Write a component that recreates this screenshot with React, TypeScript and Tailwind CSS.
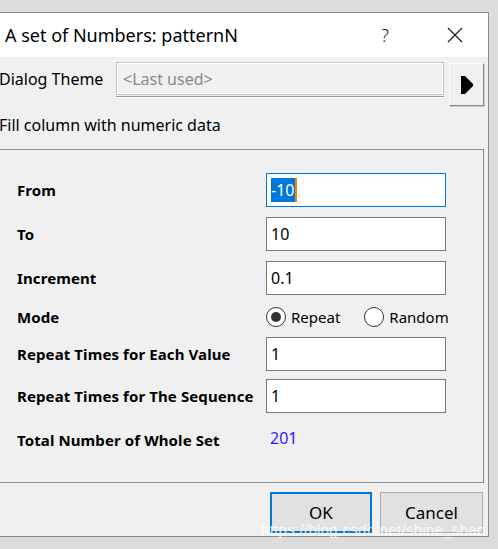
import React from 'react';

const font = "font-['Noto_Sans','DejaVu_Sans',sans-serif]";

const rows = [
  { label: 'From', value: '-10', h: 'h-[44px]', focus: true },
  { label: 'To', value: '10', h: 'h-[44px]' },
  { label: 'Increment', value: '0.1', h: 'h-[44px]' },
];

const TextBox: React.FC<{ value: string; focus?: boolean }> = ({ value, focus }) => (
  <div
    className={`w-[180px] h-[34px] bg-white border flex items-center pl-[4px] text-[16px] text-black ${
      focus ? 'border-[#0078d7]' : 'border-[#7a7a7a]'
    }`}
  >
    {focus ? (
      <span className="flex items-center h-[24px]">
        <span className="bg-[#0078d7] text-white h-[24px] leading-[24px] pr-[1px]">{value}</span>
        <span className="w-[2px] h-[24px] bg-[#ff8000]"></span>
      </span>
    ) : (
      <span>{value}</span>
    )}
  </div>
);

const Radio: React.FC<{ checked?: boolean; label: string }> = ({ checked, label }) => (
  <div className="flex items-center gap-[5px]">
    <div className="w-[20px] h-[20px] rounded-full border border-[#333] bg-white flex items-center justify-center">
      {checked && <div className="w-[10px] h-[10px] rounded-full bg-[#333]"></div>}
    </div>
    <span className="text-[15px]">{label}</span>
  </div>
);

const Row: React.FC<{ label: string; h: string; children: React.ReactNode }> = ({ label, h, children }) => (
  <div className={`flex items-center ${h}`}>
    <div className="w-[249px] font-bold text-[15px] tracking-[0.1px] text-black">{label}</div>
    {children}
  </div>
);

export default function App() {
  return (
    <div className={`relative w-[498px] h-[549px] bg-[#dcdcdc] pt-[12px] overflow-hidden ${font}`}>
      <div className="w-[489px] h-[525px] bg-[#f0f0f0] border-t border-r border-b border-[#8a8a8a] flex flex-col">
        {/* Title bar */}
        <div className="h-[44px] bg-white flex items-center">
          <span className="ml-[5px] text-[18px] text-black">A set of Numbers: patternN</span>
          <span className="ml-auto text-[18px] font-light text-[#222]">?</span>
          <svg className="ml-[58px] mr-[25px]" width="16" height="16" viewBox="0 0 16 16">
            <line x1="1" y1="1" x2="15" y2="15" stroke="#222" strokeWidth="1.2" />
            <line x1="15" y1="1" x2="1" y2="15" stroke="#222" strokeWidth="1.2" />
          </svg>
        </div>

        {/* Theme row */}
        <div className="mt-[5px] h-[44px] flex items-start">
          <div className="h-[33px] flex items-center -ml-[1px] w-[117px] text-[16px] text-black">Dialog Theme</div>
          <div className="w-[328px] flex flex-col">
            <div className="h-[33px] border border-[#c4c4c4] shadow-[inset_1px_1px_0_#fff,inset_-1px_-1px_0_#fff] flex items-center pl-[6px] text-[16px] text-[#8a8a8a]">
              &lt;Last used&gt;
            </div>
            <div className="mt-[1px] h-[2px] border-t border-[#9a9a9a] border-b border-b-[#ffffff]"></div>
          </div>
          <div className="ml-[5px] mt-[1px] w-[35px] h-[43px] bg-[#f0f0f0] border border-t-white border-l-white border-r-[#8a8a8a] border-b-[#8a8a8a] shadow-[1px_1px_0_#c8c8c8] flex items-center justify-center">
            <svg width="12" height="18" viewBox="0 0 12 18">
              <polygon points="0,0 4,0 12,8 12,10 4,18 0,18" fill="#000" />
            </svg>
          </div>
        </div>

        {/* Caption */}
        <div className="mt-[8px] h-[22px] flex items-center -ml-[1px] text-[16px] text-black">Fill column with numeric data</div>

        {/* Group box */}
        <div className="mt-[13px] -ml-[4px] w-[488px] h-[334px] border border-[#8a8a8a] pt-[18px] pl-[20px]">
          {rows.map(r => (
            <Row key={r.label} label={r.label} h={r.h}>
              <TextBox value={r.value} focus={r.focus} />
            </Row>
          ))}
          <Row label="Mode" h="h-[34px]">
            <div className="flex items-center gap-[24px]">
              <Radio checked label="Repeat" />
              <Radio label="Random" />
            </div>
          </Row>
          <Row label="Repeat Times for Each Value" h="h-[40px]">
            <TextBox value="1" />
          </Row>
          <Row label="Repeat Times for The Sequence" h="h-[44px]">
            <TextBox value="1" />
          </Row>
          <Row label="Total Number of Whole Set" h="h-[44px]">
            <span className="ml-[4px] -mt-[4px] text-[16px] text-[#2f1bff]">201</span>
          </Row>
        </div>

        {/* Buttons */}
        <div className="mt-[9px] flex justify-end gap-[8px] pr-[5px]">
          <button className="w-[102px] h-[41px] bg-[#e1e1e1] border-2 border-[#0078d7] text-[17px] text-black">OK</button>
          <button className="w-[103px] h-[41px] bg-[#e1e1e1] border border-[#adadad] text-[17px] text-black">Cancel</button>
        </div>
      </div>

      {/* Watermark */}
      <div className="absolute left-[261px] top-[519px] text-[15px] text-white/80 font-['Liberation_Sans',sans-serif] tracking-[0.3px]">
        https://blog.csdn.net/shine_shao
      </div>
    </div>
  );
}
